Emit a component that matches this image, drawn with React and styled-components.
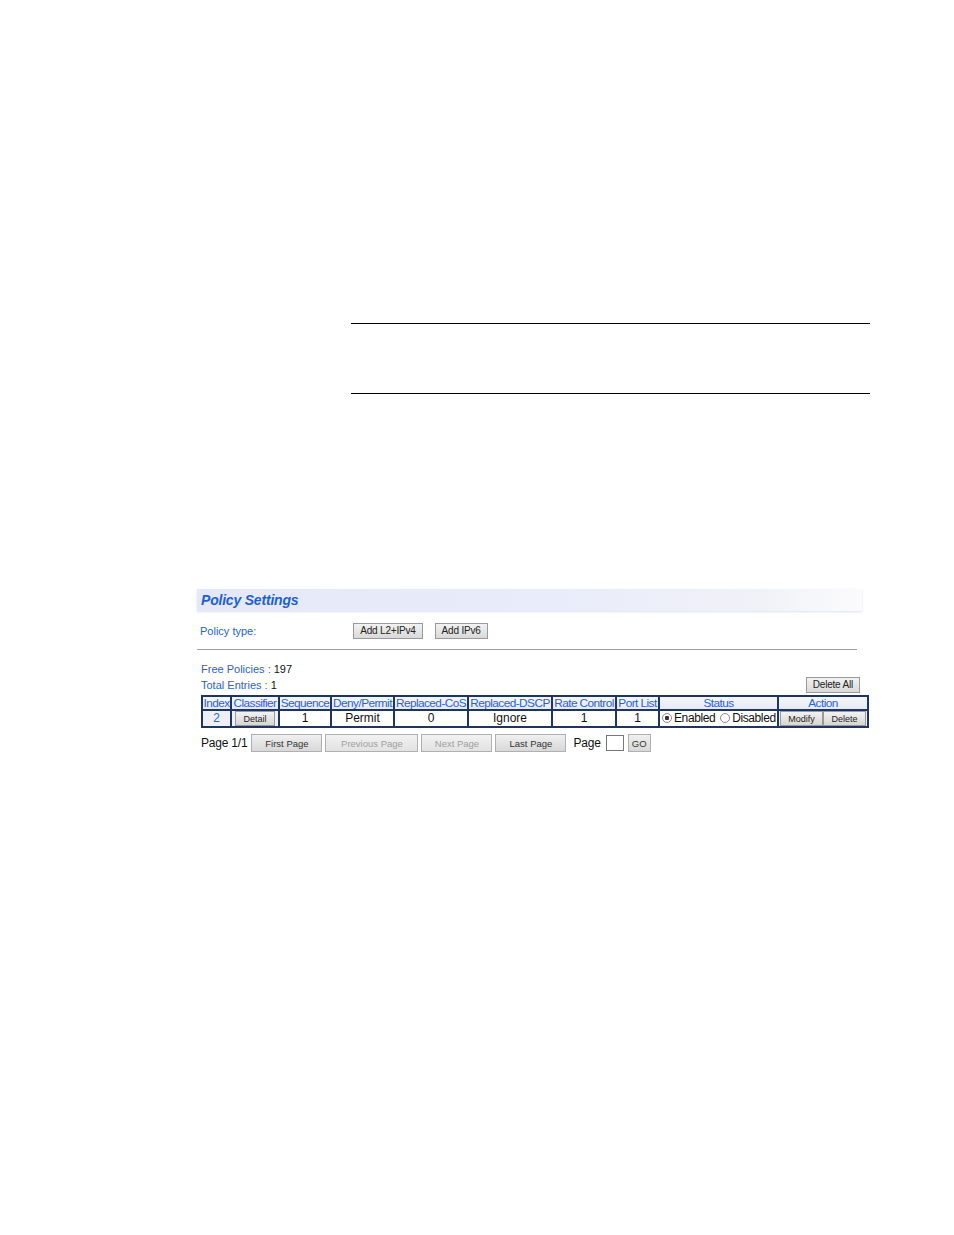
import React from 'react';
import styled, { createGlobalStyle } from 'styled-components';

const GlobalStyle = createGlobalStyle`
  body {
    margin: 0;
    background: #ffffff;
    font-family: 'Liberation Sans', Arial, sans-serif;
  }
`;

const columns = [
  { title: 'Index', width: 29 },
  { title: 'Classifier', width: 48 },
  { title: 'Sequence', width: 52 },
  { title: 'Deny/Permit', width: 63 },
  { title: 'Replaced-CoS', width: 74 },
  { title: 'Replaced-DSCP', width: 84 },
  { title: 'Rate Control', width: 64 },
  { title: 'Port List', width: 43 },
  { title: 'Status', width: 119 },
  { title: 'Action', width: 90 },
];

export default function App() {
  return (
    <>
      <GlobalStyle />
      <Page>
        <NoteBox />
        <Panel>
          <TitleBar>
            <h2>Policy Settings</h2>
          </TitleBar>
          <TypeRow>
            <Label>Policy type:</Label>
            <Buttons>
              <Button>Add L2+IPv4</Button>
              <Button>Add IPv6</Button>
            </Buttons>
          </TypeRow>
          <Rule />
          <Summary>
            <Counts>
              <p><Label>Free Policies : </Label>197</p>
              <p><Label>Total Entries : </Label>1</p>
            </Counts>
            <Button>Delete All</Button>
          </Summary>
          <Table>
            <colgroup>
              {columns.map((c) => (
                <col key={c.title} style={{ width: c.width }} />
              ))}
            </colgroup>
            <thead>
              <tr>
                {columns.map((c) => (
                  <Th key={c.title}>{c.title}</Th>
                ))}
              </tr>
            </thead>
            <tbody>
              <tr>
                <Td $shade $blue>2</Td>
                <Td $shade><SmallButton $wide>Detail</SmallButton></Td>
                <Td>1</Td>
                <Td>Permit</Td>
                <Td>0</Td>
                <Td>Ignore</Td>
                <Td>1</Td>
                <Td>1</Td>
                <Td $left>
                  <Radio $on />Enabled <Radio />Disabled
                </Td>
                <Td $shade>
                  <ActionPair>
                    <SmallButton>Modify</SmallButton>
                    <SmallButton>Delete</SmallButton>
                  </ActionPair>
                </Td>
              </tr>
            </tbody>
          </Table>
          <Pager>
            <PagerText>Page 1/1</PagerText>
            <PageButton $w={71}>First Page</PageButton>
            <PageButton $w={93} disabled>Previous Page</PageButton>
            <PageButton $w={71} disabled>Next Page</PageButton>
            <PageButton $w={71}>Last Page</PageButton>
            <PagerText $gap>Page</PagerText>
            <PageInput />
            <PageButton $w={23}>GO</PageButton>
          </Pager>
        </Panel>
      </Page>
    </>
  );
}

const Page = styled.div`
  width: 954px;
  min-height: 1235px;
  padding-top: 323px;
  box-sizing: border-box;
`;

const NoteBox = styled.div`
  margin-left: 351px;
  width: 519px;
  height: 69px;
  border-top: 1.5px solid #000;
  border-bottom: 1.5px solid #000;
`;

const Panel = styled.div`
  margin: 195px 0 0 197px;
  width: 672px;
`;

const TitleBar = styled.div`
  width: 665px;
  height: 22px;
  display: flex;
  align-items: center;
  background: linear-gradient(to right, #e4e8f8 0%, #e9ecfa 55%, #f1f2f8 85%, #fbfbfd 100%);
  box-shadow: 0 1px 2px rgba(200, 205, 220, 0.6);
  h2 {
    margin: 0 0 0 4px;
    font-size: 14px;
    font-weight: bold;
    font-style: italic;
    color: #1f5fcf;
    letter-spacing: -0.2px;
  }
`;

const TypeRow = styled.div`
  display: flex;
  align-items: center;
  margin-top: 12px;
  padding-left: 3px;
  height: 16px;
`;

const Label = styled.span`
  color: #2266cc;
  font-size: 11px;
`;

const Buttons = styled.div`
  display: flex;
  gap: 12px;
  margin-left: 97px;
`;

const Button = styled.button`
  height: 16px;
  padding: 0 6px;
  font-family: 'Liberation Sans', Arial, sans-serif;
  font-size: 10px;
  letter-spacing: -0.2px;
  color: #222;
  background: linear-gradient(#f2f2f2, #d9d9d9);
  border: 1px solid #9a9a9a;
  border-radius: 0;
  line-height: 14px;
`;

const Rule = styled.div`
  width: 660px;
  height: 1px;
  background: #a0a0a0;
  margin-top: 10px;
`;

const Summary = styled.div`
  display: flex;
  justify-content: space-between;
  align-items: flex-end;
  padding: 0 9px 2px 4px;
  margin-top: 11px;
`;

const Counts = styled.div`
  font-size: 11px;
  color: #111;
  p {
    margin: 0;
    line-height: 16px;
  }
`;

const Table = styled.table`
  margin-left: 4px;
  width: 666px;
  table-layout: fixed;
  border-collapse: collapse;
  font-size: 12px;
`;

const Th = styled.th`
  height: 12px;
  padding: 0;
  font-weight: normal;
  font-size: 11.8px;
  letter-spacing: -0.55px;
  color: #1f63dc;
  white-space: nowrap;
  overflow: visible;
  background: linear-gradient(#f4f6fb, #e6eaf3);
  border: 2px solid #1d3560;
  line-height: 12px;
`;

const Td = styled.td`
  height: 15px;
  padding: 0;
  text-align: ${(p) => (p.$left ? 'left' : 'center')};
  color: ${(p) => (p.$blue ? '#2266dd' : '#111')};
  background: ${(p) => (p.$shade ? '#eef0f5' : '#ffffff')};
  border: 2px solid #1d3560;
  white-space: nowrap;
  overflow: visible;
  line-height: 15px;
  letter-spacing: ${(p) => (p.$left ? '-0.4px' : '0')};
`;

const SmallButton = styled.button`
  height: 15px;
  width: ${(p) => (p.$wide ? '40px' : '43px')};
  padding: 0;
  font-family: 'Liberation Sans', Arial, sans-serif;
  font-size: 9px;
  color: #222;
  background: linear-gradient(#f2f2f2, #d6d6d6);
  border: 1px solid #9a9a9a;
  display: block;
  margin: 0 auto;
`;

const ActionPair = styled.div`
  display: flex;
  justify-content: space-between;
  padding: 0 1px;
`;

const Radio = styled.span`
  display: inline-block;
  width: 8px;
  height: 8px;
  margin: 0 2px 0 2px;
  border: 1px solid #8a8a8a;
  border-radius: 50%;
  background: ${(p) =>
    p.$on ? 'radial-gradient(circle, #333 0 2px, #fff 2.5px)' : '#fff'};
  vertical-align: -1px;
`;

const Pager = styled.div`
  display: flex;
  align-items: center;
  gap: 3px;
  margin-top: 6px;
  padding-left: 4px;
  height: 18px;
`;

const PagerText = styled.span`
  font-size: 12px;
  color: #111;
  letter-spacing: -0.2px;
  margin: ${(p) => (p.$gap ? '0 2px 0 4px' : '0 1px 0 0')};
`;

const PageButton = styled.button`
  width: ${(p) => p.$w}px;
  height: 18px;
  padding: 0;
  font-family: 'Liberation Sans', Arial, sans-serif;
  font-size: 9.5px;
  color: #333;
  background: linear-gradient(#f0f0f0, #d8d8d8);
  border: 1px solid #b0b0b0;
  &:disabled {
    color: #a0a0a0;
    background: linear-gradient(#f2f2f2, #e2e2e2);
  }
`;

const PageInput = styled.input`
  width: 16px;
  height: 14px;
  padding: 0;
  border: 1px solid #777;
  margin-right: 1px;
`;
